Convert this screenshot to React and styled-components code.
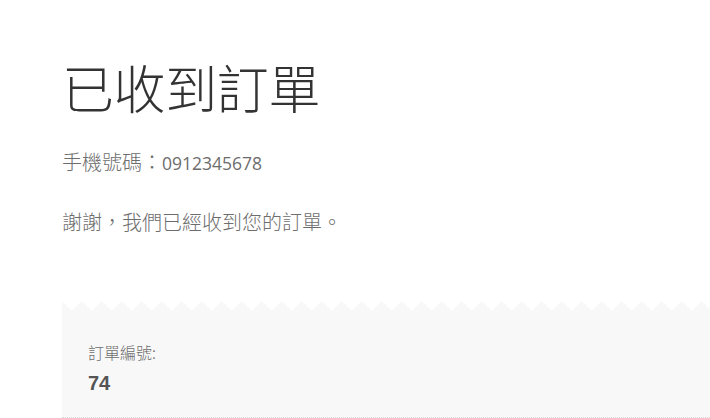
import styled, { createGlobalStyle } from "styled-components";

const GlobalStyle = createGlobalStyle`
  html, body {
    margin: 0;
    background: #ffffff;
    overflow: hidden;
  }
  body {
    font-family: "Noto Sans CJK TC", "Noto Sans", sans-serif;
    color: #6d6d6d;
  }
`;

const Page = styled.div`
  width: 710px;
  height: 418px;
  padding-left: 62px;
  box-sizing: border-box;
  overflow: hidden;
`;

const Title = styled.h1`
  margin: 56px 0 0;
  font-size: 52px;
  line-height: 62px;
  font-weight: 300;
  color: #333333;
  letter-spacing: -0.4px;
`;

const Line = styled.p`
  margin: ${(props) => props.gap || 0}px 0 0;
  font-size: 20px;
  line-height: 30px;
  font-weight: 300;
  color: #6d6d6d;
`;

const Phone = styled.span`
  font-family: "Open Sans", "Noto Sans", sans-serif;
  font-size: 17.5px;
  font-weight: 400;
`;

const Overview = styled.div`
  margin-top: 64px;
  width: 720px;
`;

const Zigzag = styled.div`
  height: 10px;
  background-image: conic-gradient(
    from -45deg at 10px 10px,
    transparent 90deg,
    #f8f8f8 90deg
  );
  background-size: 20px 10px;
  background-repeat: repeat-x;
`;

const Panel = styled.ul`
  margin: 0;
  padding: 0;
  list-style: none;
  background: #f8f8f8;
`;

const Item = styled.li`
  padding: 30px 26px 21px;
  border-bottom: 1px dotted #dcdcdc;
`;

const Label = styled.div`
  font-size: 16px;
  line-height: 22px;
  font-weight: 300;
  color: #6d6d6d;
`;

const Value = styled.strong`
  display: block;
  margin-top: 7px;
  font-family: "Liberation Sans", Arial, sans-serif;
  font-size: 20px;
  line-height: 26px;
  font-weight: 700;
  color: #555555;
`;

export default function App() {
  return (
    <>
      <GlobalStyle />
      <Page>
        <Title>已收到訂單</Title>
        <Line gap={29}>
          手機號碼：<Phone>0912345678</Phone>
        </Line>
        <Line gap={29}>謝謝，我們已經收到您的訂單。</Line>
        <Overview>
          <Zigzag />
          <Panel>
            <Item>
              <Label>訂單編號:</Label>
              <Value>74</Value>
            </Item>
          </Panel>
        </Overview>
      </Page>
    </>
  );
}
